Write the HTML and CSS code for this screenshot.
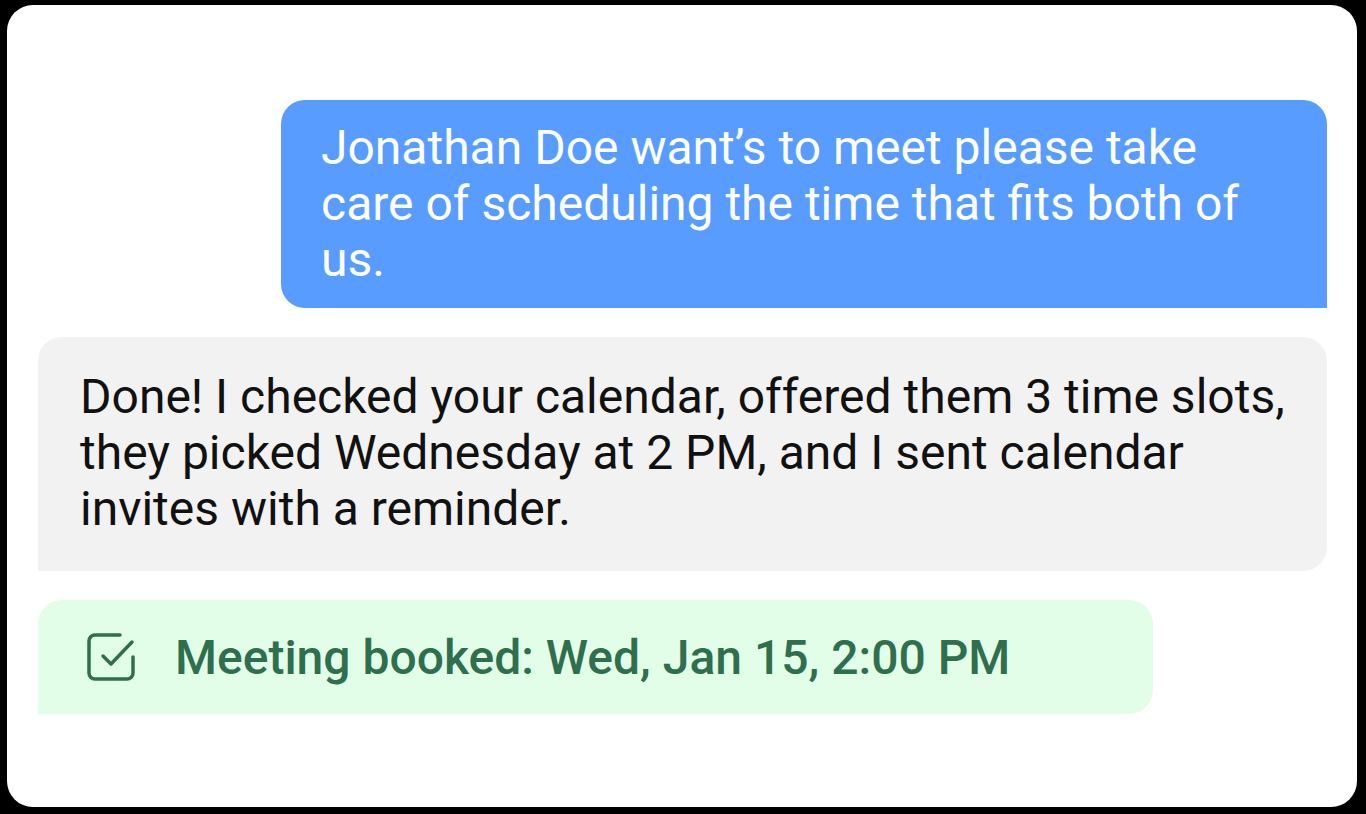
FILE: index.html
```html
<!DOCTYPE html>
<html>
<head>
    <meta charset="UTF-8">
    <meta name="viewport" content="width=device-width, initial-scale=1">
    <title>Chat</title>
    <link rel="stylesheet" href="styles.css">
</head>
<body>

<div class="card">
    <div class="bubble bubble-out">
        Jonathan Doe want’s to meet please take care of scheduling the time that fits both of us.
    </div>
    <div class="bubble bubble-in">
        Done! I checked your calendar, offered them 3 time slots, they picked Wednesday at 2 PM, and I sent calendar invites with a reminder.
    </div>
    <div class="status">
        <svg class="status-icon" width="48" height="48" viewBox="0 0 48 48" fill="none" stroke="currentColor" stroke-width="3.5" stroke-linecap="round" stroke-linejoin="round">
            <path d="M33 2H8a6 6 0 0 0 -6 6V40a6 6 0 0 0 6 6H40a6 6 0 0 0 6 -6V24"/>
            <path d="M16 23L24 31L45 9"/>
        </svg>
        <span>Meeting booked: Wed, Jan 15, 2:00 PM</span>
    </div>
</div>

</body>
</html>
```

FILE: styles.css
```css
* {
    margin: 0;
    padding: 0;
    box-sizing: border-box;
}
html, body {
    height: 100%;
}
body {
    background: #000;
    padding: 5px 9px 7px 7px;
    font-family: Roboto, "Liberation Sans", sans-serif;
}
.card {
    height: 100%;
    background: #fff;
    border-radius: 26px;
    padding: 95px 30px 0 31px;
    display: flex;
    flex-direction: column;
    gap: 29px;
}
.bubble {
    font-size: 48px;
    line-height: 56px;
    border-radius: 24px;
}
.bubble-out {
    align-self: flex-end;
    width: 1046px;
    background: #579cfe;
    color: #fff;
    padding: 20px 75px 20px 40px;
    border-bottom-right-radius: 0;
}
.bubble-in {
    background: #f2f2f2;
    color: #111;
    padding: 32px 30px 34px 42px;
    border-bottom-left-radius: 0;
}
.status {
    width: 1115px;
    height: 114px;
    background: #e2fde8;
    color: #2e6f4e;
    border-radius: 24px;
    border-bottom-left-radius: 0;
    display: flex;
    align-items: center;
    gap: 40px;
    padding-left: 49px;
    font-size: 48px;
    font-weight: 500;
}
.status-icon {
    flex: none;
}
```
